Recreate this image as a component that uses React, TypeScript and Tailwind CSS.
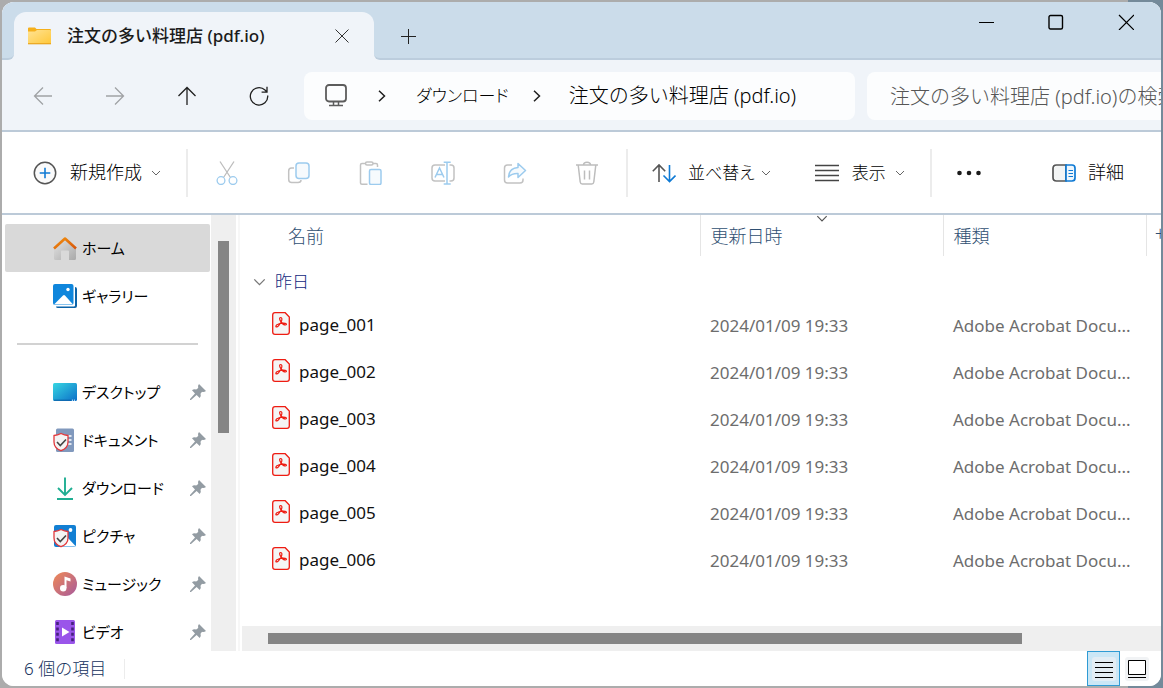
import React from "react";
import type { ReactNode } from "react";

interface FileEntry {
  name: string;
  modified: string;
  type: string;
}

interface PlaceEntry {
  label: string;
  icon: ReactNode;
}

const FOLDER_NAME = "注文の多い料理店 (pdf.io)";

const files: FileEntry[] = ["page_001", "page_002", "page_003", "page_004", "page_005", "page_006"].map((name) => ({
  name,
  modified: "2024/01/09 19:33",
  type: "Adobe Acrobat Docu...",
}));

function Chevron({ className }: { className?: string }) {
  return (
    <svg viewBox="0 0 10 6" fill="none" stroke="currentColor" className={className ?? "h-[6px] w-[10px] text-[#666]"}>
      <path d="M1 1l4 4 4-4" />
    </svg>
  );
}

function FolderIcon() {
  return (
    <svg viewBox="0 0 24 18" className="h-[18px] w-6">
      <defs>
        <linearGradient id="folder" x1="0" y1="0" x2="1" y2="1">
          <stop offset="0" stopColor="#ffe394" />
          <stop offset="1" stopColor="#ffc83a" />
        </linearGradient>
      </defs>
      <path d="M0 1.500Q0 .5 1 .5h6l1.500 1.500H22q1 0 1 1V17H0z" fill="#f5b01c" />
      <path d="M0 4.500h7L9 3h13q1 0 1 1v12.500H0z" fill="url(#folder)" />
      <path d="M0 16.800h23" stroke="#e5a01d" />
    </svg>
  );
}

function MonitorIcon() {
  return (
    <svg viewBox="0 0 24 24" fill="none" stroke="#5c5c5c" strokeWidth="1.800" className="size-6">
      <rect x="2" y="1" width="20" height="16.500" rx="3" />
      <path d="M9.500 17.500V21M14.500 17.500V21M5 21.500h14" strokeWidth="1.500" />
    </svg>
  );
}

function NewIcon() {
  return (
    <svg viewBox="0 0 24 24" fill="none" className="size-6">
      <circle cx="12" cy="12" r="10.700" fill="#fafafa" stroke="#555" strokeWidth="1.500" />
      <path d="M12 6.700v10.600M6.700 12h10.600" stroke="#0f7ad4" strokeWidth="1.600" />
    </svg>
  );
}

function CutIcon() {
  return (
    <svg viewBox="0 0 24 24" fill="none" strokeWidth="1.300" className="size-6">
      <path d="M5 0.500l10.800 16.500M19 0.500L8.200 17" stroke="#bdbdbd" />
      <circle cx="6" cy="19.600" r="3.900" fill="#fff" stroke="#9ccbee" />
      <circle cx="18" cy="19.600" r="3.900" fill="#fff" stroke="#9ccbee" />
    </svg>
  );
}

function CopyIcon() {
  return (
    <svg viewBox="0 0 24 24" fill="none" strokeWidth="1.500" className="size-6">
      <path d="M7 7H4.500Q1.700 7 1.700 10v8.500q0 3 3 3H11q3 0 3-2.500" stroke="#c2c2c2" />
      <rect x="9" y="2" width="13" height="15.500" rx="3" fill="#f6fafd" stroke="#9ccbee" />
    </svg>
  );
}

function PasteIcon() {
  return (
    <svg viewBox="0 0 24 24" fill="none" strokeWidth="1.500" className="size-6">
      <path d="M6.500 2.500H3q-1.500 0-1.500 1.500v18q0 1.200 1.500 1.200h5.500M14 2.500h3q1.500 0 1.500 1.500v2" stroke="#c2c2c2" />
      <rect x="6.500" y="1" width="7.500" height="3" rx="1.500" stroke="#c2c2c2" />
      <rect x="10.500" y="8.500" width="11.500" height="15" rx="1.500" fill="#f6fafd" stroke="#9ccbee" />
    </svg>
  );
}

function RenameIcon() {
  return (
    <svg viewBox="0 0 24 24" fill="none" strokeWidth="1.500" className="size-6">
      <path d="M14 4H4Q1 4 1 7v10q0 3 3 3h10M18.500 4H20q3 0 3 3v10q0 3-3 3h-1.500" stroke="#c2c2c2" />
      <path d="M4 16.500L8.500 7 13 16.500M5.500 13.500h6" stroke="#9ccbee" />
      <path d="M16 1.200v22M12.700 1.200h7M12.700 23h7" stroke="#9ccbee" />
    </svg>
  );
}

function ShareIcon() {
  return (
    <svg viewBox="0 0 24 24" fill="none" strokeWidth="1.500" strokeLinejoin="round" className="size-6">
      <path d="M9 4H4.500q-3 0-3 3v12q0 3 3 3H17q3 0 3-3v-1.500" stroke="#c2c2c2" />
      <path d="M15 2.500l7.500 7-7.500 7v-4q-6-.3-9.500 3.500Q6 7 15 6.500z" fill="#f6fafd" stroke="#9ccbee" />
    </svg>
  );
}

function TrashIcon() {
  return (
    <svg viewBox="0 0 24 24" fill="none" stroke="#bdbdbd" strokeWidth="1.500" className="size-6">
      <path d="M1 4h22M8.500 4q0-2.800 3.500-2.800T15.500 4M3.200 4l2 17q.3 2 2 2h9.600q1.700 0 2-2l2-17M9.500 9.500v9M14.500 9.500v9" />
    </svg>
  );
}

function SortIcon() {
  return (
    <svg viewBox="0 0 24 24" fill="none" strokeWidth="1.600" className="size-6">
      <path d="M7 21V4M.8 10.200L7 4l6.200 6.200" stroke="#555" />
      <path d="M17.500 4v16.500M11.500 14.500l6 6 6-6" stroke="#0f7ad4" />
    </svg>
  );
}

function LinesIcon() {
  return (
    <svg viewBox="0 0 24 24" stroke="#444" strokeWidth="1.300" className="size-6">
      <path d="M0 4.500h24M0 9.500h24M0 14.500h24M0 19.500h24" />
    </svg>
  );
}

function DetailsIcon() {
  return (
    <svg viewBox="0 0 24 24" fill="none" strokeWidth="1.700" className="size-6">
      <path d="M14 4H4.500Q1 4 1 7.500v9Q1 20 4.500 20H14z" fill="#f3f5f5" stroke="#555" />
      <path d="M14 4h6q3 0 3 3v10q0 3-3 3h-6z" fill="#eef6fc" stroke="#0f7ad4" />
      <path d="M16.500 9.500H21M16.500 12.500H21M16.500 15.500H21" stroke="#0f7ad4" strokeWidth="1.200" />
    </svg>
  );
}

function HomeIcon() {
  return (
    <svg viewBox="0 0 24 24" className="size-6">
      <defs>
        <linearGradient id="wall" x1="0" y1="0" x2="1" y2="1">
          <stop offset="0" stopColor="#e4e4e4" />
          <stop offset="1" stopColor="#a9a9a9" />
        </linearGradient>
        <linearGradient id="roof" x1="0" y1="0" x2="1" y2="1">
          <stop offset="0" stopColor="#f3920f" />
          <stop offset="1" stopColor="#d6550b" />
        </linearGradient>
      </defs>
      <path d="M1 12L12 3l11 9v10.500q0 1.500-1.500 1.500H16v-8.500q0-1-1-1H9q-1 0-1 1V24H2.500Q1 24 1 22.500z" fill="url(#wall)" />
      <path d="M1 12.500L12 2.500l11 10" fill="none" stroke="url(#roof)" strokeWidth="2.600" strokeLinejoin="round" />
    </svg>
  );
}

function GalleryIcon() {
  return (
    <svg viewBox="0 0 24 24" className="size-6">
      <path d="M22 3q2 0 2 2v17q0 2-2 2H5q-2 0-2-1.500h18q1 0 1-1z" fill="#0b63a8" />
      <rect width="20.500" height="21" rx="2" fill="#0f86dc" />
      <path d="M1 20.500l9-9q1-.8 2 0l8 9z" fill="#fff" />
      <circle cx="15" cy="5.500" r="1.700" fill="#fff" />
    </svg>
  );
}

function DesktopIcon() {
  return (
    <svg viewBox="0 0 24 24" className="size-6">
      <defs>
        <linearGradient id="desk" x1="0" y1="0" x2="1" y2="1">
          <stop offset="0" stopColor="#37d6e2" />
          <stop offset="1" stopColor="#0c6fc8" />
        </linearGradient>
      </defs>
      <rect y="3" width="24" height="18" rx="1.500" fill="url(#desk)" />
      <path d="M1 20.200h17" stroke="#0c5ea6" />
      <path d="M19 20.200h1M21 20.200h1" stroke="#fff" />
    </svg>
  );
}

function ShieldBadge() {
  return (
    <>
      <path
        d="M8 5.500q3.500 1.700 7 2v6.500q0 6-7 8.700Q1 20 1 14V7.500Q4.500 7.200 8 5.500z"
        fill="#f4f4f4"
        stroke="#e2393c"
        strokeWidth="1.300"
      />
      <path d="M4 14l3.300 3.500L13 11.500" fill="none" stroke="#444" strokeWidth="1.600" />
    </>
  );
}

function DocumentsIcon() {
  return (
    <svg viewBox="0 0 24 24" className="size-6">
      <rect x="3" y="0.500" width="18" height="23.500" rx="1.500" fill="#8199bd" />
      <path d="M14 8h4.500M14 12h4.500M14 16h4.500" stroke="#fff" strokeWidth="1.600" />
      <ShieldBadge />
    </svg>
  );
}

function DownloadsIcon() {
  return (
    <svg viewBox="0 0 24 24" fill="none" stroke="#1fae92" strokeWidth="1.900" className="size-6">
      <path d="M12 1.500v17M5 12l7 7 7-7M4 23h16" />
    </svg>
  );
}

function PicturesIcon() {
  return (
    <svg viewBox="0 0 24 24" className="size-6">
      <rect x="1" y="1" width="22" height="22" rx="2" fill="#127fd3" />
      <path d="M9 20l6-6 8 8.500H9z" fill="#fff" />
      <circle cx="17.500" cy="6" r="1.900" fill="#fff" />
      <ShieldBadge />
    </svg>
  );
}

function MusicIcon() {
  return (
    <svg viewBox="0 0 24 24" className="size-6">
      <defs>
        <linearGradient id="music" x1="0" y1="0" x2="1" y2="1">
          <stop offset="0" stopColor="#f08a56" />
          <stop offset="1" stopColor="#a75a9c" />
        </linearGradient>
      </defs>
      <circle cx="12" cy="12" r="12" fill="url(#music)" />
      <path d="M11.500 4.500l6 2v3l-4-1.300V16h-2z" fill="#fff" />
      <circle cx="10.200" cy="16.300" r="3.200" fill="#fff" />
    </svg>
  );
}

function VideosIcon() {
  return (
    <svg viewBox="0 0 24 24" className="size-6">
      <rect x="2" width="20" height="24" rx="1.500" fill="#9a55ea" />
      <path d="M4.500 2v21M19.500 2v21" stroke="#46217f" strokeWidth="2.600" strokeDasharray="3 2.400" />
      <path d="M9 7.500v9l7.500-4.500z" fill="#fff" />
    </svg>
  );
}

function PinIcon() {
  return (
    <svg viewBox="0 0 16 16" className="size-4" fill="#939ca3">
      <path d="M9 0l7 7q-2 1.500-4 .8l-1.500 2q1 2.500-.8 4.200L6.600 11 1 16H0v-1l5-5.600L2 6.300Q3.700 4.600 6.200 5.500l2-1.500Q7.500 1.500 9 0z" />
    </svg>
  );
}

function PdfIcon() {
  return (
    <svg viewBox="0 0 18 23" fill="none" stroke="#ee1c12" className="h-[23px] w-[18px] shrink-0">
      <path d="M3 .7h10.200L17.300 5v15q0 2.300-2.300 2.300H3Q.7 22.300.7 20V3Q.7.7 3 .7z" fill="#f5f5f5" strokeWidth="1.300" />
      <path
        d="M8.700 5.500c-1.500 0-1.300 2 0 3.900 1.400 2.200 3.300 3.700 4.900 3.600 1.300-.1 1-1.500-.3-1.700-2.500-.3-5.200.1-7.400 1-2.200.8-2.600 2.700-1.300 2.600 1.500-.1 3.300-2.600 4.600-5.200 1-2 1-4.200-.5-4.200z"
        strokeWidth="1.200"
      />
    </svg>
  );
}

const places: PlaceEntry[] = [
  { label: "デスクトップ", icon: <DesktopIcon /> },
  { label: "ドキュメント", icon: <DocumentsIcon /> },
  { label: "ダウンロード", icon: <DownloadsIcon /> },
  { label: "ピクチャ", icon: <PicturesIcon /> },
  { label: "ミュージック", icon: <MusicIcon /> },
  { label: "ビデオ", icon: <VideosIcon /> },
];

const fileActions: PlaceEntry[] = [
  { label: "切り取り", icon: <CutIcon /> },
  { label: "コピー", icon: <CopyIcon /> },
  { label: "貼り付け", icon: <PasteIcon /> },
  { label: "名前の変更", icon: <RenameIcon /> },
  { label: "共有", icon: <ShareIcon /> },
  { label: "削除", icon: <TrashIcon /> },
];

function TitleBar() {
  return (
    <header className="flex h-[58px] shrink-0 bg-[#f0f4f9]">
      <div className="w-3 rounded-br-md border-b-2 border-[#bccddd] bg-[#cbdcea]" />
      <div className="w-[360px] bg-[#cbdcea] pt-[10px]">
        <div className="flex h-full items-center rounded-t-xl bg-[#f0f4f9] pr-[25px] pl-[14px]">
          <FolderIcon />
          <span className="ml-[15px] flex-1 text-[17px] font-medium text-[#1b1b1b]">{FOLDER_NAME}</span>
          <button type="button" aria-label="タブを閉じる">
            <svg viewBox="0 0 14 14" stroke="#333" className="size-[14px]">
              <path d="M.5.5l13 13M13.500.5l-13 13" />
            </svg>
          </button>
        </div>
      </div>
      <div className="flex flex-1 rounded-bl-md border-b-2 border-[#bccddd] bg-[#cbdcea]">
        <button type="button" aria-label="新しいタブ" className="grid w-[68px] place-items-center pt-3">
          <svg viewBox="0 0 15 15" stroke="#222" className="size-[15px]">
            <path d="M7.500 0v15M0 7.500h15" />
          </svg>
        </button>
        <div className="ml-auto flex h-10">
          <button type="button" aria-label="最小化" className="grid w-[70px] place-items-center">
            <svg viewBox="0 0 16 16" stroke="#000" className="size-4">
              <path d="M1 8.500h15" />
            </svg>
          </button>
          <button type="button" aria-label="最大化" className="grid w-[70px] place-items-center">
            <svg viewBox="0 0 16 16" fill="none" stroke="#000" strokeWidth="1.400" className="size-4">
              <rect x="1" y="1.500" width="13.500" height="13.500" rx="1.500" />
            </svg>
          </button>
          <button type="button" aria-label="閉じる" className="grid w-[70px] place-items-center">
            <svg viewBox="0 0 16 16" stroke="#000" strokeWidth="1.200" className="size-4">
              <path d="M1 1l15 15M16 1L1 16" />
            </svg>
          </button>
        </div>
      </div>
    </header>
  );
}

function NavButton({ label, disabled, children }: { label: string; disabled?: boolean; children: ReactNode }) {
  return (
    <button
      type="button"
      aria-label={label}
      disabled={disabled}
      className="grid h-12 w-[72px] place-items-center text-[#1f1f1f] disabled:text-[#a0a2a5]"
    >
      <svg viewBox="0 0 20 20" fill="none" stroke="currentColor" strokeWidth="1.300" className="size-5">
        {children}
      </svg>
    </button>
  );
}

function Separator() {
  return (
    <svg viewBox="0 0 8 12" fill="none" stroke="#1f1f1f" strokeWidth="1.500" className="h-3 w-2">
      <path d="M1 .7L6.500 6 1 11.300" />
    </svg>
  );
}

function AddressRow() {
  return (
    <div className="flex h-[72px] shrink-0 border-b-2 border-[#bccad8] bg-[#f0f4f9] pt-3 pl-[5px] font-light">
      <NavButton label="戻る" disabled>
        <path d="M19 10H1.500M10 1.500L1.500 10l8.500 8.500" />
      </NavButton>
      <NavButton label="進む" disabled>
        <path d="M1 10h17.500M10 1.500l8.500 8.500-8.500 8.500" />
      </NavButton>
      <NavButton label="上へ">
        <path d="M10 19V1.500M1.500 10L10 1.500l8.500 8.500" />
      </NavButton>
      <NavButton label="最新の情報に更新">
        <path d="M18.700 9.500A8.700 8.700 0 1 1 16 4l1.500 1.500M18 .8v5.400h-5.400" />
      </NavButton>
      <nav className="ml-[9px] flex h-12 min-w-0 flex-1 items-center rounded-lg bg-[#fcfdfe] pl-5 text-black">
        <MonitorIcon />
        <div className="mx-[30px]">
          <Separator />
        </div>
        <a href="#downloads" className="text-[17px] [font-feature-settings:'palt']">
          ダウンロード
        </a>
        <div className="mr-7 ml-6">
          <Separator />
        </div>
        <a href="#folder" className="text-[20px] whitespace-nowrap">
          {FOLDER_NAME}
        </a>
      </nav>
      <input
        type="text"
        aria-label="検索"
        placeholder={`${FOLDER_NAME}の検索`}
        className="ml-3 h-12 w-[294px] rounded-l-lg bg-[#fcfdfe] pl-[23px] text-[20px] outline-none placeholder:text-[#555]"
      />
    </div>
  );
}

function Toolbar() {
  return (
    <div className="flex h-[83px] shrink-0 items-center border-b-2 border-[#bccad8] bg-white text-[18px] font-light text-black">
      <button type="button" className="flex items-center pr-[25px] pl-[31px]">
        <NewIcon />
        <span className="mr-[9px] ml-[13px]">新規作成</span>
        <Chevron />
      </button>
      <div className="mr-[3px] h-12 w-[2px] bg-[#ececec]" />
      {fileActions.map((action) => (
        <button key={action.label} type="button" aria-label={action.label} disabled className="grid h-12 w-[72px] place-items-center">
          {action.icon}
        </button>
      ))}
      <div className="ml-[3px] h-12 w-[2px] bg-[#ececec]" />
      <button type="button" className="flex items-center pl-6">
        <SortIcon />
        <span className="mr-[6px] ml-3 text-[17px] [font-feature-settings:'palt']">並べ替え</span>
        <Chevron />
      </button>
      <button type="button" className="flex items-center pr-[25px] pl-11">
        <LinesIcon />
        <span className="mr-[9px] ml-[13px] text-[17px]">表示</span>
        <Chevron />
      </button>
      <div className="h-12 w-[2px] bg-[#ececec]" />
      <button type="button" aria-label="もっと見る" className="pl-[25px]">
        <svg viewBox="0 0 24 6" fill="#1b1b1b" className="h-[6px] w-6">
          <circle cx="2.500" cy="3" r="2.300" />
          <circle cx="12" cy="3" r="2.300" />
          <circle cx="21.500" cy="3" r="2.300" />
        </svg>
      </button>
      <button type="button" className="ml-auto flex items-center gap-3 pr-[37px]">
        <DetailsIcon />
        <span>詳細</span>
      </button>
    </div>
  );
}

function SidebarItem({ label, icon, active, pinned }: PlaceEntry & { active?: boolean; pinned?: boolean }) {
  return (
    <a
      href={`#${label}`}
      aria-current={active ? "page" : undefined}
      className="flex h-12 shrink-0 items-center rounded-xs pr-1 pl-12 text-[15px] text-black aria-[current=page]:bg-[#d9d9d9]"
    >
      {icon}
      <span className="ml-[5px] flex-1 whitespace-nowrap [font-feature-settings:'palt']">{label}</span>
      {pinned && <PinIcon />}
    </a>
  );
}

function Sidebar() {
  return (
    <aside className="flex shrink-0 overflow-hidden">
      <nav className="flex w-[209px] flex-col pt-[9px] pr-px pl-[3px]">
        <SidebarItem label="ホーム" icon={<HomeIcon />} active />
        <SidebarItem label="ギャラリー" icon={<GalleryIcon />} />
        <div className="flex h-12 shrink-0 items-center px-3">
          <div className="h-[2px] flex-1 bg-[#d2d2d2]" />
        </div>
        {places.map((place) => (
          <SidebarItem key={place.label} label={place.label} icon={place.icon} pinned />
        ))}
      </nav>
      <div className="w-[25px] bg-[#efefef] px-[7px] pt-[26px]">
        <div className="h-48 bg-[#858585]" />
      </div>
      <div className="mr-[2px] ml-[2px] w-[2px] bg-[#f7f7f7]" />
    </aside>
  );
}

function FileTable() {
  return (
    <table className="w-full table-fixed text-left text-[17px] text-[#6d6d6d]">
      <colgroup>
        <col />
        <col className="w-[243px]" />
        <col className="w-[203px]" />
        <col className="w-[15px]" />
      </colgroup>
      <thead className="text-[18px] text-[#2f4f72]">
        <tr className="h-[41px]">
          <th className="border-r border-[#e5e5e5] pt-[2px] pl-[46px] font-light">名前</th>
          <th className="relative border-r border-[#e5e5e5] pt-[2px] pl-[10px] font-light">
            更新日時
            <Chevron className="absolute top-0 left-1/2 h-[7px] w-3 -translate-x-1/2 text-[#555]" />
          </th>
          <th className="border-r border-[#e5e5e5] pt-[2px] pl-[10px] font-light">種類</th>
          <th className="overflow-hidden pt-[2px] pl-2 font-light whitespace-nowrap">サイズ</th>
        </tr>
      </thead>
      <tbody>
        <tr className="h-[46px]">
          <th colSpan={4} className="pt-[6px] pl-[11px] font-light text-[#101f7c]">
            <button type="button" className="flex items-center gap-[9px]">
              <Chevron className="h-[8px] w-[13px] text-[#777]" />
              昨日
            </button>
          </th>
        </tr>
        {files.map((file) => (
          <tr key={file.name} className="h-[47px]">
            <td className="pb-1 pl-[30px]">
              <div className="flex items-center gap-[9px] text-[#111]">
                <PdfIcon />
                <span className="pt-[3px]">{file.name}</span>
              </div>
            </td>
            <td className="pl-[10px]">{file.modified}</td>
            <td className="pl-[10px] whitespace-nowrap">{file.type}</td>
            <td />
          </tr>
        ))}
      </tbody>
    </table>
  );
}

function StatusBar() {
  return (
    <footer className="flex h-[35px] shrink-0 items-center bg-white pr-3 pl-[22px] text-[17px] text-[#122f5c]">
      <span className="font-light">6 個の項目</span>
      <div className="ml-[18px] h-5 w-px bg-[#ececec]" />
      <button
        type="button"
        aria-label="詳細表示"
        className="ml-auto grid h-[35px] w-[33px] place-items-center border border-[#2f9bd4] bg-[#cbe7f6]"
      >
        <svg viewBox="0 0 24 24" className="size-6">
          <rect width="24" height="24" rx="3" fill="#e3edf4" />
          <path d="M3 5.500h18M3 10.500h18M3 15.500h18M3 20.500h18" stroke="#000" />
        </svg>
      </button>
      <button type="button" aria-label="大きいアイコン" className="ml-[5px]">
        <svg viewBox="0 0 24 24" className="size-6">
          <rect width="24" height="24" rx="3" fill="#f1f3f5" />
          <path d="M3.500 3.500h17v14h-17z" fill="#fff" stroke="#000" />
          <path d="M3 20.500h18" stroke="#000" />
        </svg>
      </button>
    </footer>
  );
}

export default function App() {
  return (
    <div className="h-screen bg-[linear-gradient(90deg,#acacac_97%,#748a9a_97%)] p-[2px] font-['Noto_Sans','Noto_Sans_CJK_JP',sans-serif]">
      <div className="flex h-full flex-col overflow-hidden rounded-xl bg-white">
        <TitleBar />
        <AddressRow />
        <Toolbar />
        <div className="flex min-h-0 flex-1">
          <Sidebar />
          <main className="flex min-w-0 flex-1 flex-col">
            <div className="min-h-0 flex-1 overflow-hidden">
              <FileTable />
            </div>
            <div className="h-[25px] shrink-0 bg-[#efefef] px-[26px] py-[7px]">
              <div className="h-[11px] w-[87%] bg-[#858585]" />
            </div>
          </main>
        </div>
        <StatusBar />
      </div>
    </div>
  );
}
